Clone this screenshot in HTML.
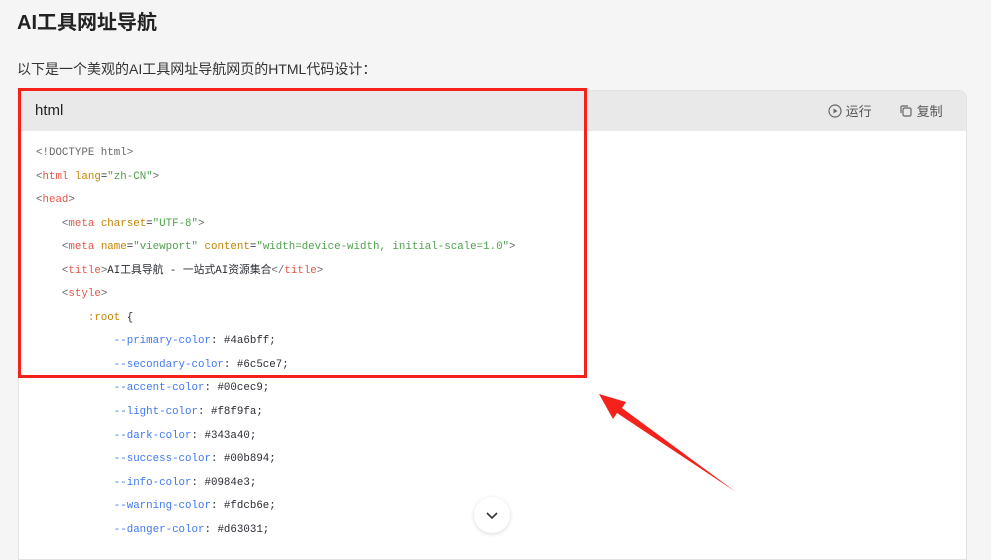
<!DOCTYPE html>
<html><head><meta charset="utf-8"><style>
body{margin:0;width:991px;height:547px;background:#f5f5f5;font-family:"Liberation Sans","Noto Sans CJK SC",sans-serif;position:relative;overflow:hidden}
h1{position:absolute;left:17px;top:6px;margin:0;font-size:20px;font-weight:bold;color:#222}
.p{position:absolute;left:17px;top:59px;font-size:14px;color:#333}
.blk{position:absolute;left:18px;top:90px;width:949px;height:470px;background:#fff;border-radius:8px 8px 0 0;overflow:hidden;border:1px solid #e2e2e2;box-sizing:border-box}
.hd{height:40px;background:#e9e9e9;position:relative}
.hd .l{position:absolute;left:16px;top:11px;font-size:15px;color:#222}
.hd .r{position:absolute;top:10px;font-size:13px;color:#555}
.code{position:absolute;left:36px;top:142px;font-family:"Liberation Mono","Noto Sans CJK SC",monospace;font-size:10.8px;color:#2a2c33;white-space:pre;line-height:23.55px}
.t{color:#e45649}.a{color:#c18401}.s{color:#50a14f}.v{color:#4078f2}.g{color:#666}
.red{position:absolute;left:18px;top:88px;width:569px;height:290px;border:3px solid #f5221b;box-sizing:border-box}
.btn{position:absolute;left:474px;top:497px;width:36px;height:36px;border-radius:50%;background:#fff;box-shadow:0 1px 5px rgba(0,0,0,.15)}
</style></head><body>
<h1>AI工具网址导航</h1>
<div class="p">以下是一个美观的AI工具网址导航网页的HTML代码设计：</div>
<div class="blk"><div class="hd"><span class="l">html</span>
<span class="r" style="left:809px"><svg width="14" height="14" viewBox="0 0 14 14" style="vertical-align:-2px"><circle cx="7" cy="7" r="6" fill="none" stroke="#666" stroke-width="1.2"/><path d="M5.5 4.5v5l4-2.5z" fill="#666"/></svg> 运行</span>
<span class="r" style="left:880px"><svg width="14" height="14" viewBox="0 0 14 14" style="vertical-align:-2px"><rect x="4" y="4" width="8" height="8" rx="1.5" fill="none" stroke="#666" stroke-width="1.2"/><path d="M2 9V3a1 1 0 0 1 1-1h6" fill="none" stroke="#666" stroke-width="1.2"/></svg> 复制</span>
</div></div>
<div class="code"><span class="g">&lt;!DOCTYPE html&gt;</span>
<span class="g">&lt;</span><span class="t">html</span> <span class="a">lang</span>=<span class="s">"zh-CN"</span><span class="g">&gt;</span>
<span class="g">&lt;</span><span class="t">head</span><span class="g">&gt;</span>
    <span class="g">&lt;</span><span class="t">meta</span> <span class="a">charset</span>=<span class="s">"UTF-8"</span><span class="g">&gt;</span>
    <span class="g">&lt;</span><span class="t">meta</span> <span class="a">name</span>=<span class="s">"viewport"</span> <span class="a">content</span>=<span class="s">"width=device-width, initial-scale=1.0"</span><span class="g">&gt;</span>
    <span class="g">&lt;</span><span class="t">title</span><span class="g">&gt;</span>AI工具导航 - 一站式AI资源集合<span class="g">&lt;/</span><span class="t">title</span><span class="g">&gt;</span>
    <span class="g">&lt;</span><span class="t">style</span><span class="g">&gt;</span>
        <span class="a">:root</span> {
            <span class="v">--primary-color</span>: #4a6bff;
            <span class="v">--secondary-color</span>: #6c5ce7;
            <span class="v">--accent-color</span>: #00cec9;
            <span class="v">--light-color</span>: #f8f9fa;
            <span class="v">--dark-color</span>: #343a40;
            <span class="v">--success-color</span>: #00b894;
            <span class="v">--info-color</span>: #0984e3;
            <span class="v">--warning-color</span>: #fdcb6e;
            <span class="v">--danger-color</span>: #d63031;</div>
<div class="red"></div>
<svg style="position:absolute;left:0;top:0" width="991" height="547"><path d="M736 492 L622 408 L626 402 L599 394 L613 419 L617 413 Z" fill="#f5221b"/></svg>
<div class="btn"><svg width="36" height="36"><path d="M13 16l5 5 5-5" fill="none" stroke="#333" stroke-width="1.6"/></svg></div>
</body></html>
